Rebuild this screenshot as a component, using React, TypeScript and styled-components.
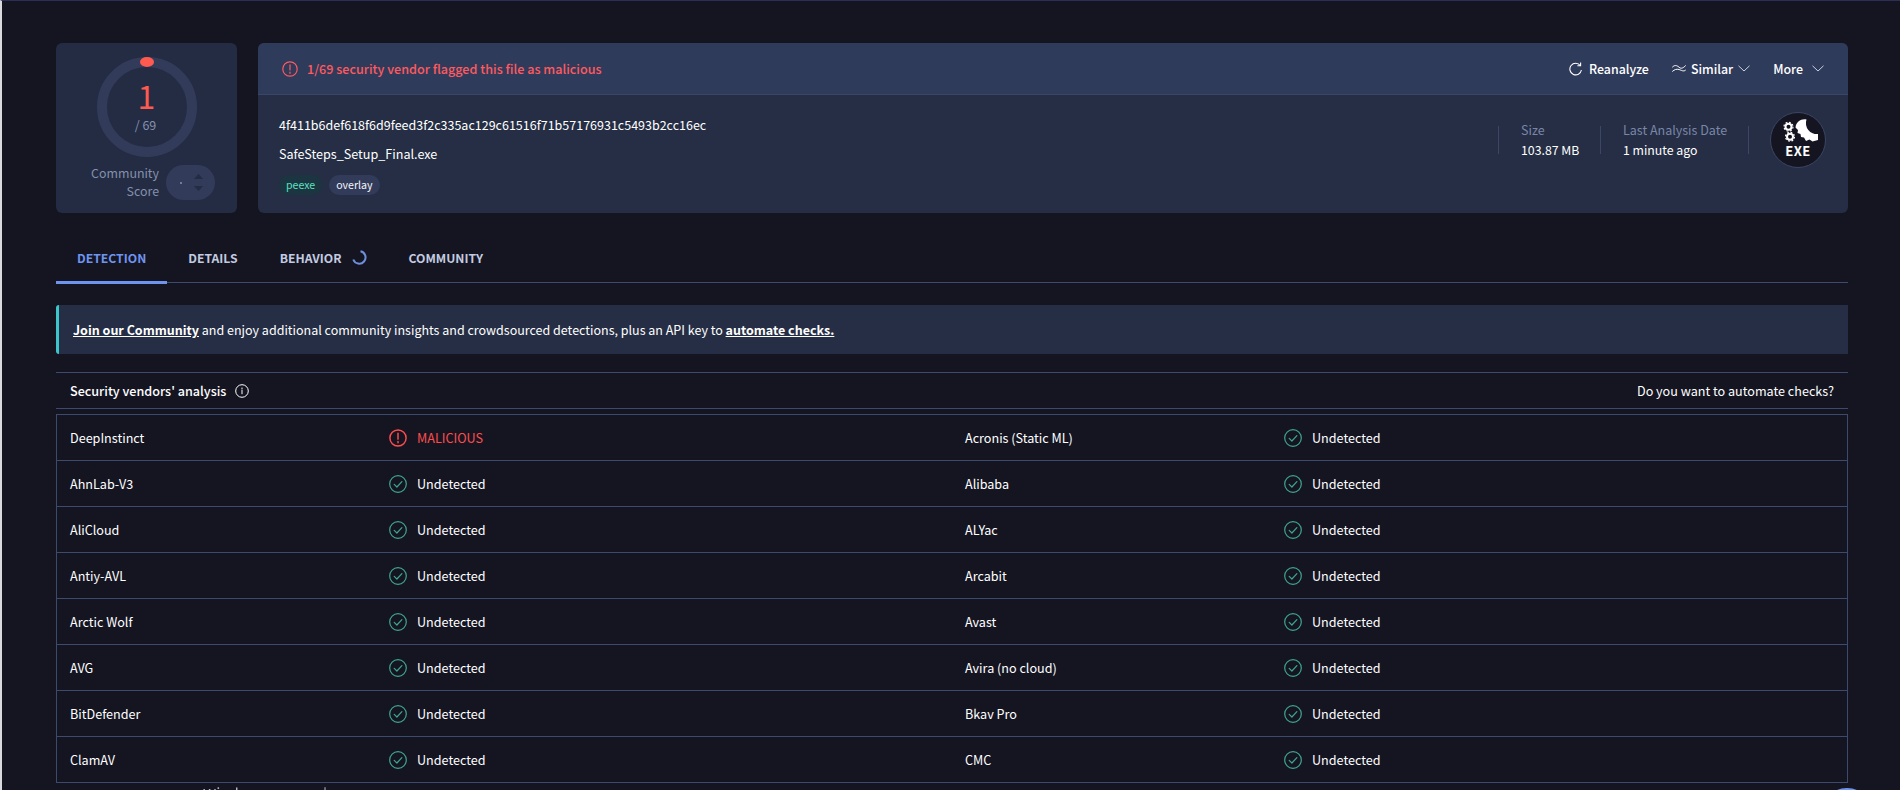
import React from 'react';
import styled, { createGlobalStyle } from 'styled-components';

const GlobalStyle = createGlobalStyle`
  html, body {
    margin: 0;
    height: 790px;
    overflow: hidden;
    background: #151522;
  }
  * { box-sizing: border-box; }
  #root {
    font-family: "Noto Sans CJK SC", "Noto Sans", sans-serif;
    color: #fff;
  }
`;

const Page = styled.div`
  height: 790px;
  overflow: hidden;
  padding: 42px 52px 0 54px;
  background: #151522;
  border-top: 1px solid #2d2d58;
  border-left: 2px solid #d9d9de;
`;

const Summary = styled.section`
  display: flex;
  gap: 21px;
  height: 170px;
`;

const ScoreCard = styled.div`
  flex: 0 0 181px;
  padding-top: 14px;
  background: #232c42;
  border-radius: 6px;
  display: flex;
  flex-direction: column;
  align-items: center;
`;

const Ring = styled.div`
  position: relative;
  width: 100px;
  height: 100px;
`;

const RingText = styled.div`
  position: absolute;
  inset: 0;
  display: flex;
  flex-direction: column;
  align-items: center;
  padding-top: 18px;
`;

const ScoreValue = styled.span`
  font-size: 32px;
  font-weight: 400;
  line-height: 40px;
  color: #ff5a50;
`;

const ScoreTotal = styled.span`
  font-size: 12.5px;
  line-height: 18px;
  margin-top: 1px;
  margin-right: 2px;
  color: #8590ae;
`;

const ScoreFooter = styled.div`
  display: flex;
  align-self: flex-start;
  align-items: center;
  gap: 7px;
  margin-top: 7px;
  padding-left: 31px;
`;

const ScoreLabel = styled.div`
  width: 72px;
  text-align: right;
  font-size: 12.4px;
  line-height: 18px;
  color: #8590ae;
`;

const VotePill = styled.div`
  width: 49px;
  height: 35px;
  border-radius: 18px;
  background: #323c5a;
  display: flex;
  align-items: center;
  justify-content: center;
`;

const FileCard = styled.div`
  flex: 1;
  background: #252e44;
  border-radius: 6px;
  overflow: hidden;
`;

const AlertBar = styled.div`
  height: 52px;
  padding: 0 24px;
  display: flex;
  align-items: center;
  justify-content: space-between;
  background: #2f3b5b;
  border-bottom: 1px solid #3a4668;
`;

const AlertText = styled.div`
  display: flex;
  align-items: center;
  gap: 9px;
  font-size: 12.6px;
  font-weight: 500;
  color: #ff5a5f;
`;

const Actions = styled.div`
  display: flex;
  align-items: center;
`;

const Action = styled.button<{ $gap?: number; $left?: number }>`
  display: flex;
  align-items: center;
  gap: ${({ $gap }) => $gap ?? 7}px;
  margin-left: ${({ $left }) => $left ?? 0}px;
  padding: 0;
  border: 0;
  background: none;
  color: #fff;
  font: 500 12.4px "Noto Sans CJK SC", "Noto Sans", sans-serif;
`;

const FileBody = styled.div`
  display: flex;
  justify-content: space-between;
  height: 118px;
  padding: 20px 22px 0 21px;
`;

const FileMain = styled.div`
  display: flex;
  flex-direction: column;
`;

const Hash = styled.div`
  font-size: 12.5px;
  line-height: 20px;
  color: #fff;
`;

const FileName = styled.div`
  font-size: 12.6px;
  line-height: 20px;
  margin-top: 9px;
  color: #fff;
`;

const Tags = styled.div`
  display: flex;
  gap: 7px;
  margin-top: 11px;
`;

const Tag = styled.span<{ $tone: 'green' | 'grey' }>`
  height: 20px;
  padding: 0 7px;
  border-radius: 10px;
  font-size: 10.6px;
  line-height: 20px;
  color: ${({ $tone }) => ($tone === 'green' ? '#5be0c0' : '#f2f4fa')};
  background: ${({ $tone }) => ($tone === 'green' ? '#1b3640' : '#323c5a')};
`;

const FileMeta = styled.div`
  display: flex;
  align-items: flex-start;
  height: 56px;
  margin-top: -3px;
`;

const Meta = styled.div<{ $width: number }>`
  width: ${({ $width }) => $width}px;
  height: 28px;
  margin-top: 14px;
  padding-left: 22px;
  border-left: 1px solid #3c4765;
`;

const MetaRule = styled.div`
  width: 1px;
  height: 28px;
  margin-top: 14px;
  background: #3c4765;
`;

const MetaLabel = styled.div`
  font-size: 12.5px;
  line-height: 17px;
  margin-top: -5px;
  color: #7a86a8;
`;

const MetaValue = styled.div`
  font-size: 12.3px;
  line-height: 20px;
  margin-top: 2px;
  color: #fff;
`;

const TypeBadge = styled.div`
  width: 56px;
  height: 56px;
  margin-left: 21px;
  border-radius: 50%;
  background: #151522;
  border: 1px solid #3c4765;
  display: flex;
  flex-direction: column;
  align-items: center;
  padding-top: 4px;
`;

const TypeText = styled.span`
  font-size: 13px;
  font-weight: 700;
  line-height: 14px;
  letter-spacing: 0.4px;
`;

const TabBar = styled.nav`
  display: flex;
  height: 70px;
  border-bottom: 1px solid #3d4a70;
`;

const Tab = styled.div<{ $active?: boolean }>`
  display: flex;
  align-items: center;
  gap: 10px;
  height: 71px;
  padding: 21px 21px 0;
  margin-bottom: -1px;
  font-size: 12.2px;
  font-weight: 700;
  color: ${({ $active }) => ($active ? '#6f94ef' : '#c3cbe0')};
  border-bottom: 3px solid ${({ $active }) => ($active ? '#6f94ef' : 'transparent')};
`;

const Banner = styled.div`
  height: 49px;
  margin-top: 22px;
  padding: 0 14px;
  display: flex;
  align-items: center;
  background: #252e44;
  border-left: 3px solid #3ec5cc;
  border-radius: 3px 0 0 3px;
  font-size: 12.5px;
  white-space: pre;
`;

const BannerLink = styled.a`
  font-weight: 700;
  color: #fff;
  text-decoration: underline;
`;

const AnalysisHead = styled.div`
  height: 37px;
  margin-top: 18px;
  padding: 0 14px;
  display: flex;
  align-items: center;
  justify-content: space-between;
  border-top: 1px solid #3d4a70;
  border-bottom: 1px solid #3d4a70;
  font-size: 12.6px;
`;

const AnalysisTitle = styled.div`
  display: flex;
  align-items: center;
  gap: 9px;
  font-weight: 500;
`;

const VendorGrid = styled.div`
  display: grid;
  grid-template-columns: 1fr 1fr;
  margin-top: 5px;
  border-top: 1px solid #3d4a70;
  border-left: 1px solid #3d4a70;
  border-right: 1px solid #3d4a70;
`;

const Cell = styled.div`
  height: 46px;
  display: flex;
  align-items: center;
  padding-left: 13px;
  border-bottom: 1px solid #3d4a70;
  font-size: 12.6px;
`;

const VendorName = styled.span`
  flex: 0 0 319px;
`;

const Verdict = styled.span<{ $bad?: boolean }>`
  display: flex;
  align-items: center;
  gap: 10px;
  color: ${({ $bad }) => ($bad ? '#ff4d4d' : '#fff')};
`;

const ClippedNote = styled.div`
  position: fixed;
  left: 203px;
  top: 785px;
  width: 124px;
  display: flex;
  justify-content: space-between;
  font-size: 15px;
  line-height: 18px;
  color: #b8bcc8;
`;

const FloatingButton = styled.div`
  position: fixed;
  left: 1819px;
  top: 788px;
  width: 56px;
  height: 56px;
  border-radius: 50%;
  background: #6f94ef;
`;

const AlertIcon = ({ size, width = 1.2 }: { size: number; width?: number }) => (
  <svg width={size} height={size} viewBox="0 0 16 16" fill="none" stroke="currentColor" strokeWidth={width}>
    <circle cx="8" cy="8" r="7.2" />
    <path d="M8 3.8v5.2M8 11v1.3" strokeLinecap="round" />
  </svg>
);

const CheckIcon = () => (
  <svg width="18" height="18" viewBox="0 0 18 18" fill="none" stroke="#3fa58d" strokeWidth="1.2">
    <circle cx="9" cy="9" r="8.3" />
    <path d="M5.2 9.4l2.7 2.6 5-5.4" strokeLinecap="round" strokeLinejoin="round" />
  </svg>
);

const InfoIcon = () => (
  <svg width="14" height="14" viewBox="0 0 14 14" fill="none" stroke="#fff" strokeWidth="1">
    <circle cx="7" cy="7" r="6.3" />
    <path d="M7 6.2v3.6M7 4v.9" strokeLinecap="round" />
  </svg>
);

const Chevron = () => (
  <svg width="12" height="7" viewBox="0 0 12 7" fill="none" stroke="#c9d0e2" strokeWidth="1">
    <path d="M0.5 0.8L6 6l5.5-5.2" />
  </svg>
);

const ReanalyzeIcon = () => (
  <svg width="13" height="14" viewBox="0 0 13 14" fill="none" stroke="#fff" strokeWidth="1.1">
    <path d="M11.300 3.600A5.800 5.800 0 1 0 12.400 8" />
    <path d="M11.600 0.600v3.200H8.400" />
  </svg>
);

const SimilarIcon = () => (
  <svg width="14" height="9" viewBox="0 0 14 9" fill="none" stroke="#fff" strokeWidth="1">
    <path d="M0.3 3.200C2.500 1 4.500 1 7 3.200S11.500 3.600 13.700 1.500" />
    <path d="M0.3 7.500C2.500 5.500 4.500 4.800 7 5.500S11.500 8 13.700 6" />
  </svg>
);

const Spinner = () => (
  <svg width="15" height="15" viewBox="0 0 15 15" fill="none" stroke="#6f8fdc" strokeWidth="2">
    <path d="M8.500 1.200A6.300 6.300 0 1 1 1.300 9.500" />
  </svg>
);

const VoteGlyphs = () => (
  <svg width="37" height="24" viewBox="0 0 37 24" fill="none">
    <circle cx="9" cy="13" r="1" fill="#8590ae" />
    <path d="M22 9l4.500-5 4.500 5z" fill="#232c42" />
    <path d="M22 16l4.500 5 4.500-5z" fill="#232c42" />
  </svg>
);

const SmallGear = ({ cx, cy }: { cx: number; cy: number }) => (
  <g stroke="#fff" fill="none">
    <circle cx={cx} cy={cy} r="3" strokeWidth="2" />
    <circle cx={cx} cy={cy} r="4.500" strokeWidth="1.200" strokeDasharray="1.800 1.730" />
  </g>
);

const ExeGears = () => (
  <svg width="40" height="27" viewBox="0 0 40 27" fill="none">
    <SmallGear cx={10.5} cy={9.7} />
    <SmallGear cx={12} cy={19.7} />
    <path
      d="M28.500 2.500C23 1.500 18 5 17.500 10.500L20 13L19.500 16L22.500 17L23 20L26 20.500L28 24L31.500 22.500L34.500 24.500L40 23L40 17A11 11 0 0 1 28.500 2.500Z"
      fill="#fff"
    />
  </svg>
);

type Vendor = { name: string; bad?: boolean };

const vendors: Vendor[] = [
  { name: 'DeepInstinct', bad: true },
  { name: 'Acronis (Static ML)' },
  { name: 'AhnLab-V3' },
  { name: 'Alibaba' },
  { name: 'AliCloud' },
  { name: 'ALYac' },
  { name: 'Antiy-AVL' },
  { name: 'Arcabit' },
  { name: 'Arctic Wolf' },
  { name: 'Avast' },
  { name: 'AVG' },
  { name: 'Avira (no cloud)' },
  { name: 'BitDefender' },
  { name: 'Bkav Pro' },
  { name: 'ClamAV' },
  { name: 'CMC' },
];

export default function App() {
  return (
    <Page>
      <GlobalStyle />
      <Summary>
        <ScoreCard>
          <Ring>
            <svg width="100" height="100" viewBox="0 0 100 100" fill="none">
              <circle cx="50" cy="50" r="45" stroke="#323c5a" strokeWidth="10" />
              <ellipse cx="50" cy="5" rx="7" ry="5" fill="#ff5a50" />
            </svg>
            <RingText>
              <ScoreValue>1</ScoreValue>
              <ScoreTotal>/ 69</ScoreTotal>
            </RingText>
          </Ring>
          <ScoreFooter>
            <ScoreLabel>Community Score</ScoreLabel>
            <VotePill>
              <VoteGlyphs />
            </VotePill>
          </ScoreFooter>
        </ScoreCard>
        <FileCard>
          <AlertBar>
            <AlertText>
              <AlertIcon size={16} />
              1/69 security vendor flagged this file as malicious
            </AlertText>
            <Actions>
              <Action>
                <ReanalyzeIcon />
                Reanalyze
              </Action>
              <Action $left={23} $gap={5}>
                <SimilarIcon />
                Similar
                <Chevron />
              </Action>
              <Action $left={23} $gap={9}>
                More
                <Chevron />
              </Action>
            </Actions>
          </AlertBar>
          <FileBody>
            <FileMain>
              <Hash>4f411b6def618f6d9feed3f2c335ac129c61516f71b57176931c5493b2cc16ec</Hash>
              <FileName>SafeSteps_Setup_Final.exe</FileName>
              <Tags>
                <Tag $tone="green">peexe</Tag>
                <Tag $tone="grey">overlay</Tag>
              </Tags>
            </FileMain>
            <FileMeta>
              <Meta $width={102}>
                <MetaLabel>Size</MetaLabel>
                <MetaValue>103.87 MB</MetaValue>
              </Meta>
              <Meta $width={148}>
                <MetaLabel>Last Analysis Date</MetaLabel>
                <MetaValue>1 minute ago</MetaValue>
              </Meta>
              <MetaRule />
              <TypeBadge>
                <ExeGears />
                <TypeText>EXE</TypeText>
              </TypeBadge>
            </FileMeta>
          </FileBody>
        </FileCard>
      </Summary>
      <TabBar>
        <Tab $active>DETECTION</Tab>
        <Tab>DETAILS</Tab>
        <Tab>
          BEHAVIOR
          <Spinner />
        </Tab>
        <Tab>COMMUNITY</Tab>
      </TabBar>
      <Banner>
        <BannerLink>Join our Community</BannerLink>
        {' and enjoy additional community insights and crowdsourced detections, plus an API key to '}
        <BannerLink>automate checks.</BannerLink>
      </Banner>
      <AnalysisHead>
        <AnalysisTitle>
          Security vendors' analysis
          <InfoIcon />
        </AnalysisTitle>
        <span>Do you want to automate checks?</span>
      </AnalysisHead>
      <VendorGrid>
        {vendors.map((v) => (
          <Cell key={v.name}>
            <VendorName>{v.name}</VendorName>
            {v.bad ? (
              <Verdict $bad>
                <AlertIcon size={18} width={1.3} />
                MALICIOUS
              </Verdict>
            ) : (
              <Verdict>
                <CheckIcon />
                Undetected
              </Verdict>
            )}
          </Cell>
        ))}
      </VendorGrid>
      <ClippedNote>
        <span>Windows</span>
        <span>|</span>
      </ClippedNote>
      <FloatingButton />
    </Page>
  );
}
